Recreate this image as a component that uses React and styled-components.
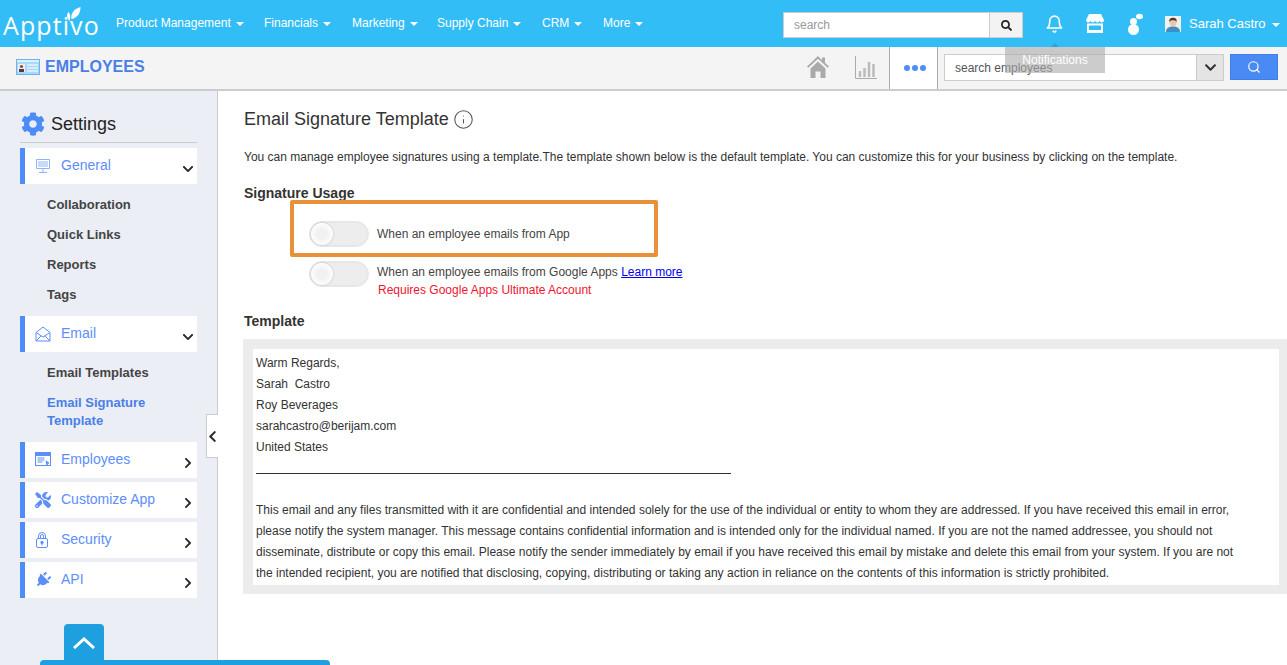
import React from "react";
import styled, { createGlobalStyle } from "styled-components";
import { FaCog, FaChevronDown, FaChevronRight, FaChevronLeft, FaSearch, FaPlug, FaTools } from "react-icons/fa";
import { FiBell, FiSearch, FiInfo } from "react-icons/fi";

const GlobalStyle = createGlobalStyle`
  html, body { margin: 0; padding: 0; height: 100%; overflow: hidden; }
  body { font-family: "Liberation Sans", Arial, sans-serif; color: #333; background: #fff; }
  * { box-sizing: border-box; }
`;

const navItems = [
  { label: "Product Management", width: 148 },
  { label: "Financials", width: 88 },
  { label: "Marketing", width: 85 },
  { label: "Supply Chain", width: 105 },
  { label: "CRM", width: 61 },
  { label: "More", width: 50 },
];

const Page = styled.div`
  width: 1287px;
  height: 665px;
  position: relative;
  overflow: hidden;
  display: flex;
  flex-direction: column;
`;

const TopBar = styled.header`
  height: 47px;
  flex: none;
  background: #33bdf6;
  display: flex;
  align-items: center;
  color: #fff;
`;

const Logo = styled.div`
  width: 116px;
  height: 47px;
  padding: 7px 0 0 3px;
  position: relative;
  font-family: "Open Sans", sans-serif;
  font-weight: 400;
  font-size: 25px;
  line-height: 36px;
  letter-spacing: 1.1px;
  color: #fff;
`;

const Leaf = styled.svg`
  position: absolute;
  left: 64px;
  top: 7px;
`;

const Nav = styled.nav`
  display: flex;
  width: 667px;
  margin-top: -2px;
`;

const NavItem = styled.div`
  width: ${(p) => p.$width}px;
  font-size: 12px;
  white-space: nowrap;
  display: flex;
  align-items: center;
  gap: 5px;
`;

const Caret = styled.span`
  display: inline-block;
  border-top: 4px solid #fff;
  border-left: 4px solid transparent;
  border-right: 4px solid transparent;
  margin-top: 2px;
`;

const UserCaret = styled(Caret)`
  margin-left: -2px;
`;

const TopSearch = styled.div`
  width: 240px;
  height: 26px;
  display: flex;
  margin-top: 3px;
  background: #fff;
  border: 1px solid #ccc;
`;

const TopSearchInput = styled.div`
  flex: 1;
  font-size: 12px;
  line-height: 24px;
  padding-left: 10px;
  color: #999;
`;

const TopSearchButton = styled.div`
  width: 33px;
  background: #f3f3f3;
  border-left: 1px solid #ccc;
  display: flex;
  align-items: center;
  justify-content: center;
  color: #222;
  font-size: 11px;
`;

const TopIcons = styled.div`
  display: flex;
  align-items: center;
  margin-left: 22px;
  height: 47px;
`;

const TopIcon = styled.div`
  width: ${(p) => p.$width}px;
  display: flex;
  justify-content: center;
  font-size: 22px;
`;

const User = styled.div`
  display: flex;
  align-items: center;
  font-size: 13px;
  margin-left: 21px;
  gap: 8px;
  white-space: nowrap;
`;

const SubBar = styled.div`
  height: 44px;
  flex: none;
  background: #f4f4f4;
  border-bottom: 2px solid #ccc;
  display: flex;
  align-items: stretch;
`;

const AppTitle = styled.div`
  flex: 1;
  display: flex;
  align-items: center;
  gap: 5px;
  padding: 0 0 3px 16px;
  font-size: 16px;
  font-weight: bold;
  color: #4a7fe8;
`;

const ToolIcon = styled.div`
  width: ${(p) => p.$width}px;
  display: flex;
  align-items: center;
  justify-content: center;
  padding-bottom: 2px;
`;

const DotsTab = styled.div`
  width: 49px;
  background: #fff;
  border-left: 1px solid #aaa;
  border-right: 1px solid #aaa;
  padding-left: 2px;
  display: flex;
  align-items: center;
  justify-content: center;
  gap: 2px;
`;

const Dot = styled.span`
  width: 6px;
  height: 6px;
  border-radius: 50%;
  background: #4d8cfb;
`;

const AppSearch = styled.div`
  width: 280px;
  height: 27px;
  margin: 7px 0 0 6px;
  display: flex;
  background: #fff;
  border: 1px solid #ccc;
`;

const AppSearchInput = styled.div`
  flex: 1;
  font-size: 12px;
  line-height: 27px;
  padding-left: 10px;
  color: #555;
`;

const AppSearchCaret = styled.div`
  width: 27px;
  background: #e4e4e4;
  border-left: 1px solid #ccc;
  display: flex;
  align-items: center;
  justify-content: center;
  color: #333;
  font-size: 13px;
`;

const AppSearchButton = styled.div`
  width: 48px;
  height: 26px;
  margin: 7px 9px 0 6px;
  background: #4a8af4;
  border: 1px solid #3f7fe8;
  display: flex;
  align-items: center;
  justify-content: center;
  color: #fff;
  font-size: 14px;
`;

const Body = styled.div`
  flex: 1;
  display: flex;
  min-height: 0;
`;

const Sidebar = styled.aside`
  width: 218px;
  flex: none;
  background: #ebeef4;
  border-right: 1px solid #ccc;
  padding: 21px 20px 0;
`;

const SettingsHead = styled.div`
  height: 31px;
  display: flex;
  align-items: center;
  gap: 6px;
  border-bottom: 1px solid #ccc;
  font-size: 18px;
  color: #222;
  margin-bottom: 5px;
  padding-bottom: 6px;
  svg { color: #4d8cfb; margin-left: 1px; }
`;

const Group = styled.div`
  height: 36px;
  background: #fff;
  border-left: 5px solid #4d8cfb;
  margin-bottom: ${(p) => p.$gap}px;
  display: flex;
  position: relative;
  color: #5d8efb;
  font-size: 14px;
`;

const GroupIcon = styled.div`
  width: 36px;
  padding: 10px 0 0 10px;
  color: #5d8efb;
  font-size: 16px;
  line-height: 16px;
`;

const GroupLabel = styled.div`
  padding-top: 9px;
`;

const GroupChevron = styled.div`
  position: absolute;
  right: 3px;
  top: 15px;
  color: #2b2b2b;
  font-size: 12px;
  line-height: 12px;
`;

const SubMenu = styled.div`
  display: flex;
  flex-direction: column;
  padding: 6px 0 6px 27px;
`;

const SubLink = styled.div`
  font-size: 13px;
  font-weight: bold;
  line-height: 18px;
  padding: 6px 0;
  color: ${(p) => (p.$active ? "#4a7fe8" : "#444")};
`;

const PlugIcon = styled(FaPlug)`
  transform: rotate(45deg);
`;

const Collapse = styled.div`
  position: absolute;
  left: 206px;
  top: 414px;
  width: 12px;
  height: 44px;
  background: #fff;
  border: 1px solid #ccc;
  border-right: none;
  display: flex;
  align-items: center;
  justify-content: center;
  color: #2b2b2b;
  font-size: 13px;
`;

const ScrollUp = styled.div`
  position: absolute;
  left: 64px;
  top: 624px;
  width: 40px;
  height: 37px;
  background: #1e9fe0;
  border-radius: 4px 4px 0 0;
  color: #fff;
  display: flex;
  align-items: center;
  justify-content: center;
`;

const BottomTab = styled.div`
  position: absolute;
  left: 40px;
  top: 660px;
  width: 290px;
  height: 5px;
  background: #1e9fe0;
  border-radius: 4px 4px 0 0;
`;

const Tooltip = styled.div`
  position: absolute;
  left: 1005px;
  top: 47px;
  width: 100px;
  height: 26px;
  background: rgba(170, 170, 170, 0.6);
  color: #fff;
  font-size: 12px;
  line-height: 26px;
  text-align: center;
  &::before {
    content: "";
    position: absolute;
    left: 46px;
    top: -4px;
    border-bottom: 4px solid #2fa3d6;
    border-left: 4px solid transparent;
    border-right: 4px solid transparent;
  }
`;

const Main = styled.main`
  flex: 1;
  padding: 16px 0 0 25px;
  color: #333;
`;

const TitleRow = styled.div`
  display: flex;
  align-items: center;
  gap: 4px;
  height: 24px;
  margin-left: 1px;
  font-size: 18px;
  color: #333;
  svg { color: #555; }
`;

const Description = styled.p`
  margin: 19px 0 0 1px;
  font-size: 12px;
  line-height: 14px;
  color: #333;
`;

const SectionTitle = styled.h4`
  margin: ${(p) => p.$top}px 0 0 1px;
  font-size: 14px;
  line-height: 16px;
  font-weight: bold;
  color: #333;
`;

const ToggleRow = styled.div`
  display: flex;
  gap: 8px;
  margin-left: 66px;
  margin-top: ${(p) => p.$top}px;
  position: relative;
  font-size: 12px;
  line-height: 18px;
  color: #444;
`;

const Highlight = styled.div`
  position: absolute;
  left: -19px;
  top: -21px;
  width: 368px;
  height: 57px;
  border: 4px solid #e8903a;
  border-radius: 2px;
`;

const Toggle = styled.div`
  width: 60px;
  height: 26px;
  flex: none;
  border-radius: 13px;
  background: #ededed;
  border: 1px solid #e8e8e8;
  box-shadow: inset 0 0 0 1px #e6e6e6;
  position: relative;
  &::after {
    content: "";
    position: absolute;
    left: 1px;
    top: 1px;
    width: 22px;
    height: 22px;
    border-radius: 50%;
    background: radial-gradient(circle, #f1f1f1 30%, #fff 75%);
    box-shadow: 0 0 2px #aaa;
  }
`;

const ToggleText = styled.div`
  padding-top: ${(p) => p.$top}px;
`;

const Warning = styled.div`
  color: #f0142f;
  padding-left: 1px;
`;

const Learn = styled.a`
  color: #0000ee;
  text-decoration: underline;
`;

const TemplateBox = styled.div`
  margin: 10px 0 0 0;
  padding: 10px 8px 9px 10px;
  background: #ececec;
`;

const TemplateInner = styled.div`
  background: #fff;
  padding: 4px 34px 1px 3px;
  font-size: 12px;
  line-height: 21px;
  color: #333;
`;

const Line = styled.div`
  min-height: 21px;
  white-space: pre-wrap;
`;

const Rule = styled.div`
  width: 475px;
  height: 1px;
  background: #333;
  margin: 15px 0 26px;
`;

const IdCard = () => (
  <svg width="24" height="16" viewBox="0 0 24 16">
    <rect x="0.5" y="0.5" width="23" height="15" fill="#a9d8fb" stroke="#6cb4ee" />
    <rect x="1" y="1" width="22" height="2" fill="#dff1ff" />
    <rect x="2" y="5" width="7" height="8" fill="#eee" />
    <circle cx="5.5" cy="7.5" r="1.6" fill="#8a4a3a" />
    <rect x="3" y="10" width="5" height="3" fill="#5a3a36" />
    <path d="M11 6h11M11 9h11M11 12h11" stroke="#fff" strokeWidth="1.2" />
  </svg>
);

const HomeIcon = () => (
  <svg width="22" height="22" viewBox="0 0 22 22" fill="#aaa">
    <path d="M11 0L0 10.500l1.300 1.300L11 2.800l9.700 9 1.300-1.300-4-3.800V1.500h-3v2.700z" />
    <path d="M3.500 12.500L11 5.500l7.500 7V22h-5v-6.500h-5V22h-5z" />
  </svg>
);

const ChartIcon = () => (
  <svg width="22" height="23" viewBox="0 0 22 23" fill="none">
    <path d="M.5 0v22.500H22" stroke="#aaa" />
    <path d="M5 21v-6M9.500 21v-9M14 21V6M18.500 21V8" stroke="#bbb" strokeWidth="2.500" />
  </svg>
);

const StoreIcon = () => (
  <svg width="18" height="20" viewBox="0 0 18 20" fill="#fff">
    <path d="M3 0h12l3 6c0 1.500-1 2.500-2.200 2.500S13.600 7.500 13.500 6.500c-.1 1-1.100 2-2.200 2S9.100 7.500 9 6.500C8.900 7.500 7.800 8.500 6.700 8.500S4.600 7.500 4.500 6.500C4.400 7.500 3.400 8.500 2.200 8.500S0 7.500 0 6z" />
    <path d="M1 9.500h16V19H1zM3 11.500V16h12v-4.500z" fillRule="evenodd" />
  </svg>
);

const ChatIcon = () => (
  <svg width="16" height="22" viewBox="0 0 16 22" fill="#fff">
    <circle cx="6.500" cy="16.500" r="5.500" />
    <circle cx="6.500" cy="8.500" r="3.500" />
    <ellipse cx="12.500" cy="3.500" rx="3.500" ry="2.800" />
  </svg>
);

const Avatar = () => (
  <svg width="16" height="16" viewBox="0 0 16 16">
    <rect width="16" height="16" fill="#f1f1ee" />
    <path d="M1 16c0-4 3-5.500 7-5.500s7 1.500 7 5.500z" fill="#3f8fc6" />
    <circle cx="8" cy="6.500" r="3.500" fill="#eec6a6" />
    <path d="M4.300 6C4 2.500 6 1.800 8 1.800s4 .7 3.700 4.200C11 4.500 9 4.300 8 4.300S5 4.500 4.300 6z" fill="#4a3a30" />
  </svg>
);

const MonitorIcon = () => (
  <svg width="16" height="16" viewBox="0 0 16 16" fill="none" stroke="#8fb2fb">
    <path d="M1.500 1.500h13v9h-13z" />
    <path d="M3 4h10M3 6h10M3 8h10M8 11v3M4 14.500h8" />
  </svg>
);

const MailIcon = () => (
  <svg width="16" height="16" viewBox="0 0 16 16" fill="none" stroke="#5d8efb">
    <path d="M1 6.500L8 1l7 5.500V15H1zM1 6.500L8 11l7-4.500M1 15l5-5M15 15l-5-5" />
  </svg>
);

const WindowIcon = () => (
  <svg width="16" height="14" viewBox="0 0 16 14" fill="none" stroke="#5d8efb">
    <rect x="0.500" y="0.500" width="15" height="13" />
    <rect x="0.500" y="0.500" width="15" height="3" fill="#5d8efb" />
    <path d="M2.500 6h7M2.500 8h7M2.500 10h5" />
    <path d="M11 9l3 2-1.500.5-.5 1.500z" fill="#5d8efb" />
  </svg>
);

const LockIcon = () => (
  <svg width="14" height="16" viewBox="0 0 14 16" fill="none" stroke="#5d8efb">
    <rect x="1.500" y="6.500" width="11" height="9" rx="1.500" />
    <path d="M3.500 6.500V4a3.500 3.500 0 017 0v2.500M5.500 6.500V4a1.500 1.500 0 013 0v2.500" />
    <circle cx="7" cy="10.500" r="1.200" fill="#5d8efb" />
    <path d="M7 11v2.500" />
  </svg>
);

const SideGroup = ({ icon, label, open, gap = 4 }) => (
  <Group $gap={gap}>
    <GroupIcon>{icon}</GroupIcon>
    <GroupLabel>{label}</GroupLabel>
    <GroupChevron>{open ? <FaChevronDown /> : <FaChevronRight />}</GroupChevron>
  </Group>
);

export default function App() {
  return (
    <Page>
      <GlobalStyle />
      <TopBar>
        <Logo>
          Apptivo
          <Leaf width="17" height="14" viewBox="0 0 16 14" fill="#fff">
            <path d="M5 14C2 11 2 7 4 5c1.500 1.500 2.500 5 1 9z" />
            <path d="M7 12C6 7 9 2 16 0c0 6-3 11-9 12z" />
          </Leaf>
        </Logo>
        <Nav>
          {navItems.map((n) => (
            <NavItem key={n.label} $width={n.width}>
              {n.label}
              <Caret />
            </NavItem>
          ))}
        </Nav>
        <TopSearch>
          <TopSearchInput>search</TopSearchInput>
          <TopSearchButton>
            <FaSearch />
          </TopSearchButton>
        </TopSearch>
        <TopIcons>
          <TopIcon $width={19}><FiBell /></TopIcon>
          <TopIcon $width={62}><StoreIcon /></TopIcon>
          <TopIcon $width={18}><ChatIcon /></TopIcon>
        </TopIcons>
        <User>
          <Avatar />
          Sarah Castro
          <UserCaret />
        </User>
      </TopBar>

      <SubBar>
        <AppTitle>
          <IdCard />
          EMPLOYEES
        </AppTitle>
        <ToolIcon $width={48}><HomeIcon /></ToolIcon>
        <ToolIcon $width={47}><ChartIcon /></ToolIcon>
        <DotsTab><Dot /><Dot /><Dot /></DotsTab>
        <AppSearch>
          <AppSearchInput>search employees</AppSearchInput>
          <AppSearchCaret><FaChevronDown /></AppSearchCaret>
        </AppSearch>
        <AppSearchButton><FiSearch /></AppSearchButton>
      </SubBar>

      <Body>
        <Sidebar>
          <SettingsHead>
            <FaCog size={24} />
            Settings
          </SettingsHead>
          <SideGroup icon={<MonitorIcon />} label="General" open gap={0} />
          <SubMenu>
            <SubLink>Collaboration</SubLink>
            <SubLink>Quick Links</SubLink>
            <SubLink>Reports</SubLink>
            <SubLink>Tags</SubLink>
          </SubMenu>
          <SideGroup icon={<MailIcon />} label="Email" open gap={0} />
          <SubMenu>
            <SubLink>Email Templates</SubLink>
            <SubLink $active>Email Signature<br />Template</SubLink>
          </SubMenu>
          <SideGroup icon={<WindowIcon />} label="Employees" />
          <SideGroup icon={<FaTools />} label="Customize App" />
          <SideGroup icon={<LockIcon />} label="Security" />
          <SideGroup icon={<PlugIcon />} label="API" />
        </Sidebar>

        <Main>
          <TitleRow>
            Email Signature Template
            <FiInfo size={21} strokeWidth={1.2} />
          </TitleRow>
          <Description>
            You can manage employee signatures using a template.The template shown below is the default template. You can customize this for your business by clicking on the template.
          </Description>
          <SectionTitle $top={21}>Signature Usage</SectionTitle>
          <ToggleRow $top={20}>
            <Highlight />
            <Toggle />
            <ToggleText $top={4}>When an employee emails from App</ToggleText>
          </ToggleRow>
          <ToggleRow $top={14}>
            <Toggle />
            <ToggleText $top={2}>
              When an employee emails from Google Apps <Learn href="#">Learn more</Learn>
              <Warning>Requires Google Apps Ultimate Account</Warning>
            </ToggleText>
          </ToggleRow>
          <SectionTitle $top={14}>Template</SectionTitle>
          <TemplateBox>
            <TemplateInner>
              <Line>Warm Regards,</Line>
              <Line>Sarah  Castro</Line>
              <Line>Roy Beverages</Line>
              <Line>sarahcastro@berijam.com</Line>
              <Line>United States</Line>
              <Rule />
              <Line>This email and any files transmitted with it are confidential and intended solely for the use of the individual or entity to whom they are addressed. If you have received this email in error, please notify the system manager. This message contains confidential information and is intended only for the individual named. If you are not the named addressee, you should not disseminate, distribute or copy this email. Please notify the sender immediately by email if you have received this email by mistake and delete this email from your system. If you are not the intended recipient, you are notified that disclosing, copying, distributing or taking any action in reliance on the contents of this information is strictly prohibited.</Line>
            </TemplateInner>
          </TemplateBox>
        </Main>
      </Body>

      <Tooltip>Notifications</Tooltip>
      <Collapse><FaChevronLeft /></Collapse>
      <ScrollUp>
        <svg width="22" height="12" viewBox="0 0 22 12" fill="none" stroke="#fff" strokeWidth="3">
          <path d="M1 11l10-9 10 9" />
        </svg>
      </ScrollUp>
      <BottomTab />
    </Page>
  );
}
